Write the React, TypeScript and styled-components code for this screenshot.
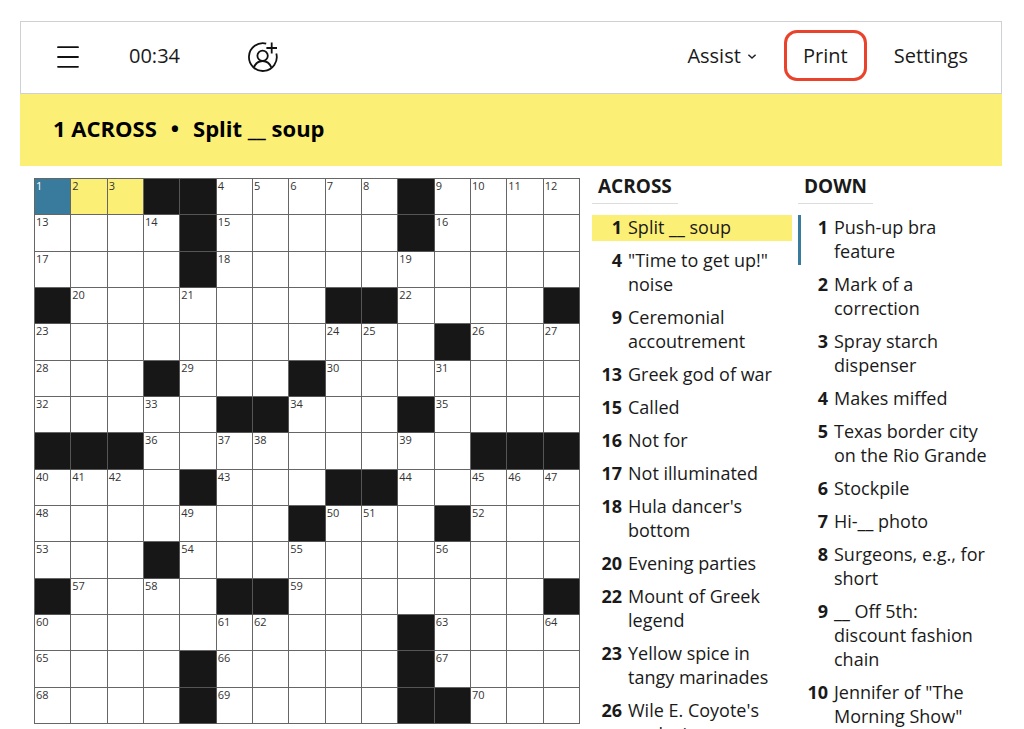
import React from "react";
import styled, { createGlobalStyle } from "styled-components";

const sans = `"Open Sans", "Noto Sans", sans-serif`;

const GlobalStyle = createGlobalStyle`
  * { box-sizing: border-box; }
  body { margin: 0; background: #fff; color: #1a1a1a; font-family: ${sans}; }
  button { font: inherit; color: inherit; background: none; border: 0; padding: 0; cursor: pointer; }
`;

const Page = styled.main`
  display: flex;
  flex-direction: column;
  height: 100vh;
  overflow: hidden;
  padding: 21px 22px 0 20px;
`;

const Toolbar = styled.header`
  display: flex;
  align-items: center;
  justify-content: space-between;
  flex: none;
  height: 73px;
  padding: 0 16px 4px 36px;
  border: 1px solid #cfd0d3;
  font-size: 20px;
  line-height: 24px;
`;

const ToolGroup = styled.div`
  display: flex;
  align-items: center;
`;

const IconButton = styled.button`
  && { display: flex; padding-top: 3px; }
`;

const Timer = styled.time`
  margin: 0 62px 0 50px;
  width: 56px;
`;

const ToolButton = styled.button<{ $outlined?: boolean }>`
  display: flex;
  align-items: center;
  justify-content: center;
  gap: 6px;
  height: 51px;
  min-width: ${(p) => (p.$outlined ? "83px" : "0")};
  && {
    padding: 0 ${(p) => (p.$outlined ? "0" : "17px")};
    margin: ${(p) => (p.$outlined ? "0 10px" : "0")};
    border: ${(p) => (p.$outlined ? "3px solid #ea432c" : "0")};
    border-radius: 13px;
  }
`;

const ClueBar = styled.section`
  display: flex;
  align-items: center;
  flex: none;
  gap: 14px;
  height: 72px;
  padding: 0 33px 4px;
  background: #fcef75;
  color: #000;
  font-size: 22px;
  font-weight: 700;
  white-space: pre;
`;

const Game = styled.div`
  display: grid;
  grid-template-columns: minmax(0, 546fr) minmax(0, 410fr);
  gap: 12px;
  flex: 1;
  min-height: 0;
  padding: 12px 0 0 14px;
`;

const Board = styled.div`
  display: grid;
  grid-template-columns: repeat(15, minmax(0, 1fr));
  align-self: start;
  border: solid #666;
  border-width: 1px 0 0 1px;
`;

const Block = styled.div`
  aspect-ratio: 1;
  border: solid #555;
  border-width: 0 1px 1px 0;
  background: #171717;
`;

const fills = { plain: "#fff", word: "#fcef75", active: "#387b9c" };

const Square = styled.button<{ $fill: keyof typeof fills }>`
  display: flex;
  align-items: flex-start;
  aspect-ratio: 1;
  && {
    padding: 0 1px;
    border: solid #666;
    border-width: 0 1px 1px 0;
    background: ${(p) => fills[p.$fill]};
    color: ${(p) => (p.$fill === "active" ? "#fff" : "#333")};
    font-size: 11px;
    line-height: 13px;
  }
`;

const ClueLists = styled.div`
  display: grid;
  grid-template-columns: minmax(0, 200fr) minmax(0, 204fr);
  gap: 6px;
  min-height: 0;
`;

const ClueColumn = styled.section`
  display: flex;
  flex-direction: column;
  align-items: flex-start;
  min-height: 0;
`;

const Heading = styled.h2`
  margin: 0 0 11px;
  padding: 0 6px 9px;
  border-bottom: 1px solid #dcdcdc;
  font-size: 19px;
  line-height: 16px;
`;

const List = styled.ol`
  display: flex;
  flex-direction: column;
  gap: 7px;
  flex: 1;
  align-self: stretch;
  min-height: 0;
  margin: 0;
  padding: 0;
  overflow-y: auto;
  scrollbar-width: none;
  list-style: none;
`;

const Clue = styled.li<{ $state?: "selected" | "crossing" }>`
  display: grid;
  grid-template-columns: 27px minmax(0, 1fr);
  gap: 6px;
  flex: none;
  padding: 0 12px 2px 0;
  border-left: 3px solid ${(p) => (p.$state === "selected" ? "#fcef75" : p.$state === "crossing" ? "#387b9c" : "transparent")};
  background: ${(p) => (p.$state === "selected" ? "#fcef75" : "transparent")};
  font-size: 18px;
  line-height: 24px;
`;

const ClueNumber = styled.b`
  text-align: right;
`;

const ROWS = [
  "...##.....#....",
  "....#.....#....",
  "....#..........",
  "#.......##....#",
  "...........#...",
  "...#...#.......",
  ".....##...#....",
  "###.........###",
  "....#...##.....",
  ".......#...#...",
  "...#...........",
  "#....##.......#",
  "..........#....",
  "....#.....#....",
  "....#.....##...",
];

const isBlock = (r: number, c: number) => (ROWS[r]?.[c] ?? "#") === "#";

let next = 1;
const CELLS = ROWS.flatMap((row, r) =>
  [...row].map((_, c) => {
    const block = isBlock(r, c);
    const starts = !block && (isBlock(r, c - 1) || isBlock(r - 1, c));
    return { r, c, block, label: starts ? next++ : undefined };
  }),
);

const ACROSS: [number, string][] = [
  [1, "Split __ soup"],
  [4, '"Time to get up!" noise'],
  [9, "Ceremonial accoutrement"],
  [13, "Greek god of war"],
  [15, "Called"],
  [16, "Not for"],
  [17, "Not illuminated"],
  [18, "Hula dancer's bottom"],
  [20, "Evening parties"],
  [22, "Mount of Greek legend"],
  [23, "Yellow spice in tangy marinades"],
  [26, "Wile E. Coyote's explosive"],
];

const DOWN: [number, string][] = [
  [1, "Push-up bra feature"],
  [2, "Mark of a correction"],
  [3, "Spray starch dispenser"],
  [4, "Makes miffed"],
  [5, "Texas border city on the Rio Grande"],
  [6, "Stockpile"],
  [7, "Hi-__ photo"],
  [8, "Surgeons, e.g., for short"],
  [9, "__ Off 5th: discount fashion chain"],
  [10, 'Jennifer of "The Morning Show"'],
];

function MenuIcon() {
  return (
    <svg width="22" height="24" viewBox="0 0 22 24" fill="none" stroke="#111" strokeWidth="1.8" strokeLinecap="round">
      <path d="M1 2.200h20M1 12h20M1 21.800h20" />
    </svg>
  );
}

function AddPlayerIcon() {
  return (
    <svg width="32" height="32" viewBox="0 0 32 32" fill="none" stroke="#111" strokeWidth="1.8">
      <path d="M19.200 2.600A13.900 13.900 0 1 0 29.300 12.500" />
      <circle cx="15.600" cy="14.800" r="5.200" />
      <path d="M6.700 26.600c1.800-4.300 5-6.600 8.900-6.600s7.100 2.300 8.900 6.600" />
      <path d="M24.700 1.600v10.800M19.400 7h10.600" />
    </svg>
  );
}

function ChevronIcon() {
  return (
    <svg width="10" height="8" viewBox="0 0 10 8" fill="none" stroke="#222" strokeWidth="1.5">
      <path d="M1.400 2.800 5 6.100l3.600-3.300" />
    </svg>
  );
}

function ClueSection({ title, clues, state }: { title: string; clues: [number, string][]; state: "selected" | "crossing" }) {
  return (
    <ClueColumn>
      <Heading>{title}</Heading>
      <List>
        {clues.map(([n, text], i) => (
          <Clue key={n} $state={i === 0 ? state : undefined}>
            <ClueNumber>{n}</ClueNumber>
            <span>{text}</span>
          </Clue>
        ))}
      </List>
    </ClueColumn>
  );
}

export default function App() {
  return (
    <>
      <GlobalStyle />
      <Page>
        <Toolbar>
          <ToolGroup>
            <IconButton aria-label="Menu"><MenuIcon /></IconButton>
            <Timer>00:34</Timer>
            <IconButton aria-label="Add player"><AddPlayerIcon /></IconButton>
          </ToolGroup>
          <ToolGroup>
            <ToolButton>Assist <ChevronIcon /></ToolButton>
            <ToolButton $outlined>Print</ToolButton>
            <ToolButton>Settings</ToolButton>
          </ToolGroup>
        </Toolbar>
        <ClueBar>
          <span>1 ACROSS</span>
          <span>•</span>
          <span>Split __ soup</span>
        </ClueBar>
        <Game>
          <Board>
            {CELLS.map(({ r, c, block, label }) =>
              block ? (
                <Block key={`${r}-${c}`} />
              ) : (
                <Square
                  key={`${r}-${c}`}
                  aria-label={`Row ${r + 1}, column ${c + 1}`}
                  $fill={r === 0 && c === 0 ? "active" : r === 0 && c < 3 ? "word" : "plain"}
                >
                  {label}
                </Square>
              ),
            )}
          </Board>
          <ClueLists>
            <ClueSection title="ACROSS" clues={ACROSS} state="selected" />
            <ClueSection title="DOWN" clues={DOWN} state="crossing" />
          </ClueLists>
        </Game>
      </Page>
    </>
  );
}
